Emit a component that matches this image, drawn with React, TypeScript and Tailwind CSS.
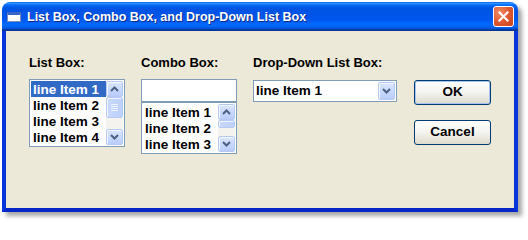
import React from "react";

function Chevron({ up }: { up?: boolean }) {
  return (
    <svg width="9" height="6" viewBox="0 0 9 6">
      <path
        d={up ? "M1 5 L4.5 1.5 L8 5" : "M1 1 L4.5 4.5 L8 1"}
        stroke="#4d6185"
        strokeWidth="2"
        fill="none"
      />
    </svg>
  );
}

function SBtn({ up }: { up?: boolean }) {
  return (
    <div className="flex h-[16px] items-center justify-center rounded-[2px] border border-[#b7c9f3] bg-gradient-to-b from-[#dbe6fe] to-[#b9cdfa] shadow-[inset_1px_1px_0_#f2f6ff]">
      <Chevron up={up} />
    </div>
  );
}

function Thumb({ h }: { h: number }) {
  return (
    <div
      className="flex flex-col items-center justify-center gap-[1px] rounded-[2px] border border-[#b7c9f3] bg-gradient-to-r from-[#c9d8fd] to-[#bcd0fb] shadow-[inset_1px_1px_0_#f2f6ff]"
      style={{ height: h }}
    >
      {h > 14 && (
        <>
          <div className="h-[1px] w-[7px] bg-[#eef4fe]" />
          <div className="h-[1px] w-[7px] bg-[#eef4fe]" />
          <div className="h-[1px] w-[7px] bg-[#eef4fe]" />
          <div className="h-[1px] w-[7px] bg-[#eef4fe]" />
        </>
      )}
    </div>
  );
}

function ScrollBar({ thumb }: { thumb: number }) {
  return (
    <div className="flex w-[17px] flex-col">
      <SBtn up />
      <Thumb h={thumb} />
      <div className="flex-1 bg-[#f4f3ee]" />
      <SBtn />
    </div>
  );
}

function Row({ text, sel }: { text: string; sel?: boolean }) {
  return (
    <div
      className={
        sel
          ? "h-[16px] bg-[#316ac5] pl-[2px] text-[13.5px] font-bold leading-[17px] text-white"
          : "h-[16px] pl-[2px] text-[13.5px] font-bold leading-[17px] text-black"
      }
    >
      {text}
    </div>
  );
}

function Label({ children }: { children: React.ReactNode }) {
  return <div className="h-[16px] text-[13px] font-bold leading-[16px] text-black">{children}</div>;
}

export default function App() {
  return (
    <div className="h-[220px] w-[528px] overflow-hidden bg-white font-['Liberation_Sans',Arial,sans-serif]">
      <div className="ml-[2px] mt-[2px] flex h-[210px] w-[516px] flex-col rounded-t-[8px] shadow-[4px_4px_4px_rgba(0,0,0,0.35)]">
        {/* Title bar */}
        <div className="flex h-[29px] items-center rounded-t-[8px] bg-[linear-gradient(to_bottom,#0058ee_0%,#3593ff_4%,#288eff_6%,#127dff_8%,#036ffc_10%,#0262ee_14%,#0057e5_20%,#0054e3_24%,#0055eb_56%,#005bf5_66%,#026afe_76%,#0062ef_86%,#0052d6_92%,#0040ab_94%,#003092_100%)] pr-[4px]">
          <div className="ml-[5px] mt-[1px] h-[10px] w-[14px] border border-[#7b8fb8] border-t-[3px] border-t-[#3a64c8] bg-white" />
          <div className="ml-[6px] mt-[1px] flex-1 text-[12.5px] font-bold leading-[16px] text-white [text-shadow:1px_1px_#0a2a8a]">
            List Box, Combo Box, and Drop-Down List Box
          </div>
          <div className="flex h-[21px] w-[21px] items-center justify-center rounded-[3px] border border-white bg-[radial-gradient(circle_at_30%_30%,#f08a64_0%,#e05a32_50%,#c2421c_100%)]">
            <svg width="11" height="11" viewBox="0 0 11 11">
              <path d="M1.5 1.5 L9.5 9.5 M9.5 1.5 L1.5 9.5" stroke="#fff" strokeWidth="2" strokeLinecap="square" />
            </svg>
          </div>
        </div>
        {/* Body */}
        <div className="flex flex-1 border-x-[4px] border-b-[4px] border-x-[#0836dc] border-b-[#0626c8]">
          <div className="flex flex-1 bg-[#ece9d8] pl-[23px] pt-[24px]">
            {/* List box */}
            <div className="flex w-[96px] flex-col">
              <Label>List Box:</Label>
              <div className="mt-[8px] flex h-[68px] border border-[#7f9db9] bg-white p-[1px]">
                <div className="flex flex-1 flex-col">
                  <Row text="line Item 1" sel />
                  <Row text="line Item 2" />
                  <Row text="line Item 3" />
                  <Row text="line Item 4" />
                </div>
                <ScrollBar thumb={21} />
              </div>
            </div>
            {/* Combo box */}
            <div className="ml-[16px] flex w-[96px] flex-col">
              <Label>Combo Box:</Label>
              <div className="mt-[8px] h-[23px] border border-[#7f9db9] bg-white" />
              <div className="flex h-[52px] border border-[#7f9db9] bg-white p-[1px]">
                <div className="flex flex-1 flex-col">
                  <Row text="line Item 1" />
                  <Row text="line Item 2" />
                  <Row text="line Item 3" />
                </div>
                <ScrollBar thumb={8} />
              </div>
            </div>
            {/* Drop-down list */}
            <div className="ml-[16px] flex w-[144px] flex-col">
              <Label>Drop-Down List Box:</Label>
              <div className="mt-[9px] flex h-[22px] border border-[#7f9db9] bg-white p-[1px]">
                <div className="flex-1 pl-[1px] text-[13.5px] font-bold leading-[18px] text-black">line Item 1</div>
                <div className="flex w-[17px] items-center justify-center rounded-[2px] border border-[#b7c9f3] bg-gradient-to-b from-[#dbe6fe] to-[#b9cdfa] shadow-[inset_1px_1px_0_#f2f6ff]">
                  <Chevron />
                </div>
              </div>
            </div>
            {/* Buttons */}
            <div className="ml-[17px] flex w-[77px] flex-col pt-[25px]">
              <button className="h-[25px] rounded-[3px] border border-[#003c74] bg-gradient-to-b from-white via-[#f3f3ef] to-[#dedbcd] text-[13.5px] font-bold text-black shadow-[inset_0_0_0_1px_#a9c4ef]">
                OK
              </button>
              <button className="mt-[15px] h-[25px] rounded-[3px] border border-[#003c74] bg-gradient-to-b from-white via-[#f3f3ef] to-[#dedbcd] text-[13.5px] font-bold text-black">
                Cancel
              </button>
            </div>
          </div>
        </div>
      </div>
    </div>
  );
}
